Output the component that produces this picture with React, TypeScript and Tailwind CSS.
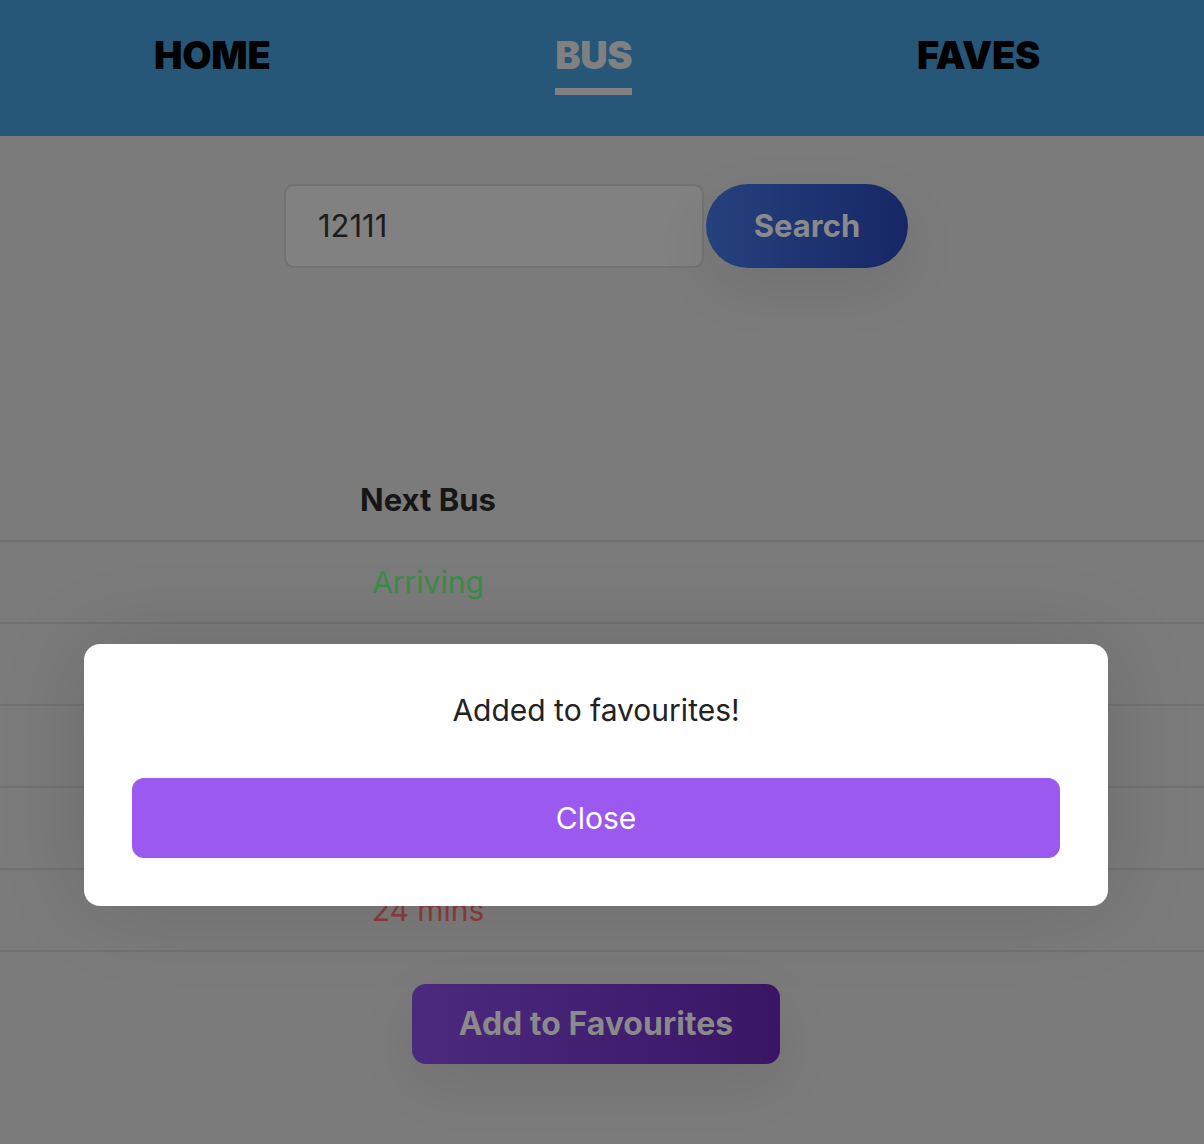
import React from 'react';

const rows = [
    { text: 'Arriving', color: 'text-[#3b8b49]' },
    { text: '6 mins', color: 'text-[#3b8b49]' },
    { text: '11 mins', color: 'text-[#8a7a2e]' },
    { text: '17 mins', color: 'text-[#8b3b3b]' },
    { text: '24 mins', color: 'text-[#8b3b3b]' },
];

const NavItem = ({ label, active }: { label: string; active?: boolean }) => (
    <div className="flex flex-col items-center">
        <div
            className={`text-[38px] leading-none font-black tracking-[-0.3px] ${
                active ? 'text-[#808080]' : 'text-black'
            }`}
        >
            {label}
        </div>
        <div className={`mt-[14px] h-[7px] w-full ${active ? 'bg-[#808080]' : 'bg-transparent'}`} />
    </div>
);

const App = () => {
    return (
        <div
            className="relative min-h-[1144px] w-full overflow-hidden bg-[#7b7b7b]"
            style={{ fontFamily: 'Inter, "Noto Sans", sans-serif' }}
        >
            <header className="h-[136px] bg-[#275778]">
                <div className="w-[1192px] flex justify-between items-start pl-[154px] pr-[152px] pt-[36px]">
                    <NavItem label="HOME" />
                    <NavItem label="BUS" active />
                    <NavItem label="FAVES" />
                </div>
            </header>

            <div className="w-[1192px] flex justify-center items-center mt-[48px] gap-[2px]">
                <div className="w-[420px] h-[84px] rounded-[10px] border-2 border-[#727272] bg-[#818181] flex items-center px-[32px] text-[31px] text-[#1c1c1c]">
                    12111
                </div>
                <button className="w-[202px] h-[84px] rounded-full bg-gradient-to-r from-[#26417e] to-[#172766] text-[31px] font-bold text-[#8a8a8a] shadow-[0_20px_60px_rgba(0,0,0,0.08)]">
                    Search
                </button>
            </div>

            <div className="mt-[192px]">
                <div className="h-[82px] border-b-2 border-[#717171] flex items-center">
                    <div className="w-[856px] text-center text-[31px] font-bold text-[#161616]">Next Bus</div>
                </div>
                {rows.map((row) => (
                    <div key={row.text} className="h-[82px] border-b-2 border-[#717171] flex items-center">
                        <div className={`w-[856px] text-center text-[30px] ${row.color}`}>{row.text}</div>
                    </div>
                ))}
            </div>

            <div className="w-[1192px] flex justify-center mt-[32px]">
                <button className="w-[368px] h-[80px] rounded-[14px] bg-gradient-to-r from-[#4b2a7e] to-[#3a1566] text-[32px] font-bold text-[#8a8a8a] shadow-[0_20px_60px_rgba(0,0,0,0.08)]">
                    Add to Favourites
                </button>
            </div>

            {/* modal */}
            <div className="absolute left-[84px] top-[644px] w-[1024px] h-[262px] rounded-[16px] bg-white px-[48px] pt-[48px] shadow-[0_0_90px_rgba(0,0,0,0.12)]">
                <p className="text-center text-[30px] leading-[36px] text-[#222222]">Added to favourites!</p>
                <button className="mt-[50px] w-full h-[80px] rounded-[12px] bg-[#9b59ef] text-[30px] text-white">
                    Close
                </button>
            </div>
        </div>
    );
};

export default App;
